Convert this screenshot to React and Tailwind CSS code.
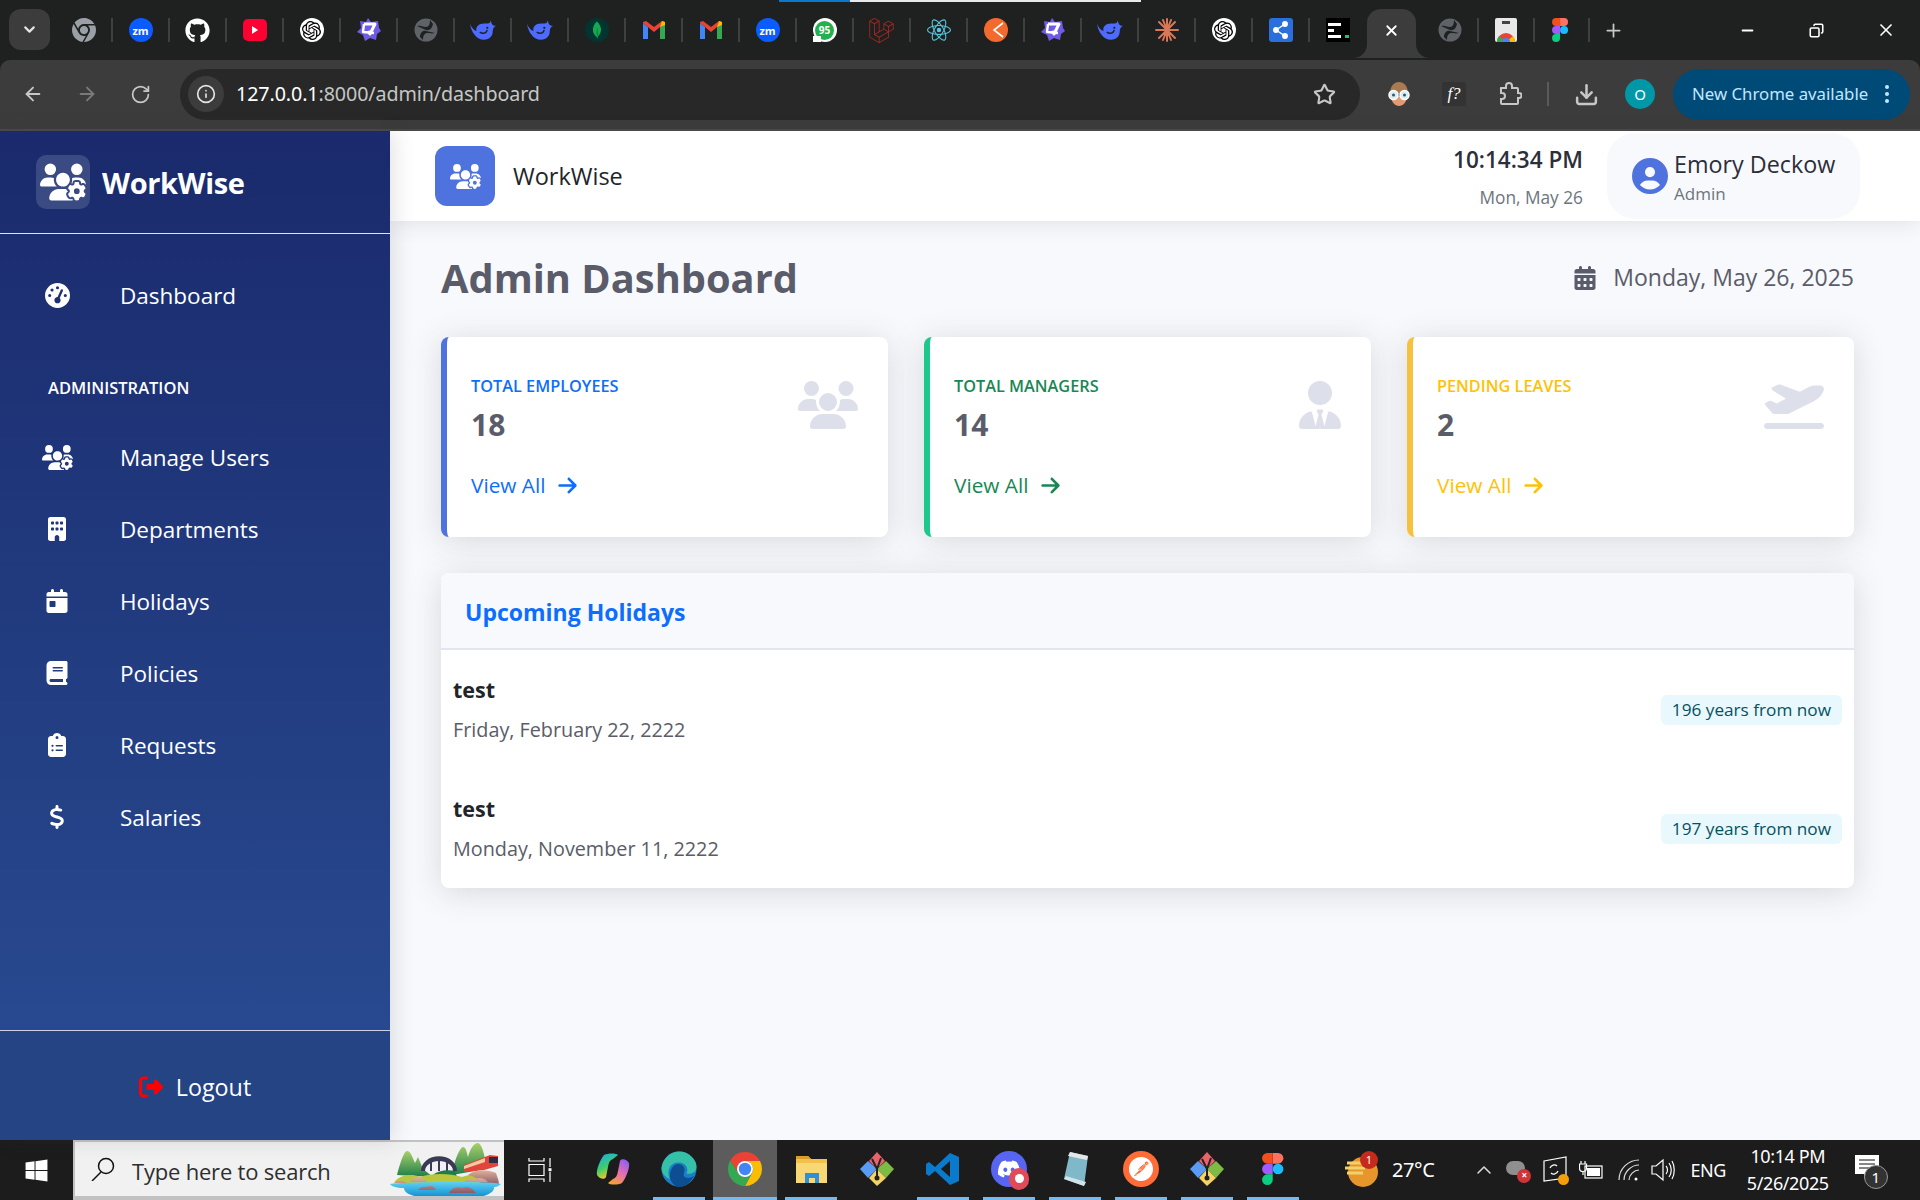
import React from "react";
import { FaUsersGear, FaGaugeHigh, FaBuilding, FaCalendarDay, FaBook, FaClipboardList, FaDollarSign, FaRightFromBracket, FaUsers, FaUserTie, FaPlaneDeparture, FaArrowRight, FaCalendarDays, FaCircleUser, FaGithub, FaChrome, FaWindows, FaDiscord } from "react-icons/fa6";
import { SiOpenai, SiMongodb, SiLaravel, SiReact, SiPostman } from "react-icons/si";
import { LuArrowLeft, LuArrowRight, LuRotateCw, LuInfo, LuStar, LuDownload, LuX, LuPlus, LuMinus, LuCopy, LuChevronDown, LuChevronUp } from "react-icons/lu";

const font = "font-['Open_Sans','Noto_Sans',sans-serif]";

function Zm() {
  return <div className="w-[24px] h-[24px] rounded-full bg-[#0b5cff] flex items-center justify-center text-white text-[11px] font-bold leading-none">zm</div>;
}
function Gmail() {
  return (
    <svg width="24" height="20" viewBox="0 0 24 20">
      <path d="M1 19V3l5 4v12z" fill="#4285f4" />
      <path d="M23 19V3l-5 4v12z" fill="#34a853" />
      <path d="M1 3l11 9 11-9v-1l-3-1-8 6-8-6-3 1z" fill="#ea4335" />
      <path d="M20 1l3 1v3l-5 2z" fill="#fbbc04" />
    </svg>
  );
}
function Deep() {
  return (
    <svg width="26" height="22" viewBox="0 0 24 20">
      <path d="M0 4c1 8 6 15 13 15 5 0 8-3 8-8 0-2 1-4 3-5-2 0-3 0-4-2l-1-3c0 2-1 3-3 3h-3C8 4 5 7 6 11 3 10 1 7 0 4z" fill="#4d6bfe" />
      <circle cx="16" cy="8" r="1" fill="#1f2121" />
      <path d="M9 12c3 2 6 1 7-2" stroke="#1f2121" strokeWidth="1.3" fill="none" />
    </svg>
  );
}
function StarOfD() {
  return (
    <svg width="24" height="24" viewBox="0 0 24 24">
      <path d="M11 0l3 4 7-1 1 7 2 3-4 3-1 6-6-2-5 3-2-6-6-3 4-4-1-7 6 1z" fill="#6d5ce7" />
      <path d="M7 6l11 0-5 10-2-3" stroke="#fff" strokeWidth="3" fill="none" strokeLinejoin="round" />
      <path d="M7 6l-1 8 11 1" stroke="#fff" strokeWidth="2.4" fill="none" strokeLinejoin="round" />
    </svg>
  );
}
function GlobeDark() {
  return (
    <svg width="24" height="24" viewBox="0 0 24 24">
      <circle cx="12" cy="12" r="11.5" fill="#5f6368" />
      <path d="M3 8c4-1 6 1 9 1s4-3 4-7l3 4c-1 5-4 7-7 6s-6-3-9-4z" fill="#1f2121" />
      <path d="M21 15c-3 1-6 0-8 0s-4 2-4 7l-3-3c0-4 3-7 6-6s6 1 9 2z" fill="#1f2121" />
    </svg>
  );
}
function OpenAi() {
  return <div className="w-[24px] h-[24px] rounded-full bg-white flex items-center justify-center"><SiOpenai className="w-[19px] h-[19px] text-black" /></div>;
}
function Gm95() {
  return (
    <div className="w-[24px] h-[24px] rounded-full bg-white flex items-center justify-center relative">
      <div className="w-[19px] h-[19px] rounded-full bg-[#22b14c] text-white text-[10px] font-bold leading-[19px] text-center">95</div>
      <div className="absolute left-0 bottom-0 w-[8px] h-[6px] bg-white" />
    </div>
  );
}
function Orange() {
  return (
    <div className="w-[24px] h-[24px] rounded-full bg-[#f26a2e] flex items-center justify-end pr-[4px]">
      <svg width="12" height="16" viewBox="0 0 12 16"><path d="M11 1L2 8l9 7" stroke="#fff" strokeWidth="1.6" fill="none" /></svg>
    </div>
  );
}
function Claude() {
  return (
    <svg width="24" height="24" viewBox="0 0 24 24" stroke="#d97757" strokeWidth="2" strokeLinecap="round">
      <path d="M12 12V1M12 12v11M12 12H1M12 12h11M12 12L4 4M12 12l8-8M12 12l-8 8M12 12l8 8M12 12L8 2M12 12l4-10M12 12L8 22M12 12l4 10" />
    </svg>
  );
}
function ShareBlue() {
  return (
    <div className="w-[24px] h-[24px] rounded-[3px] bg-[#2a6fdb] flex items-center justify-center">
      <svg width="16" height="18" viewBox="0 0 16 18" fill="#fff" stroke="#fff" strokeWidth="1.5"><circle cx="3" cy="9" r="2.2" /><circle cx="12" cy="3" r="2.2" /><circle cx="12" cy="15" r="2.2" /><path d="M3 9l9-6M3 9l9 6" /></svg>
    </div>
  );
}
function BlackApp() {
  return (
    <div className="w-[24px] h-[24px] bg-black flex flex-col justify-center gap-[3px] pl-[2px]">
      <div className="w-[13px] h-[3px] bg-white" />
      <div className="w-[6px] h-[3px] bg-white" />
      <div className="flex justify-between pr-[1px]"><div className="w-[13px] h-[3px] bg-white" /><div className="w-[4px] h-[3px] bg-[#22c55e]" /></div>
    </div>
  );
}
function WebStore() {
  return (
    <div className="w-[22px] h-[24px] bg-[#e8e8e8] rounded-[2px] flex flex-col items-center justify-between overflow-hidden">
      <div className="w-[8px] h-[3px] mt-[3px] bg-[#444]" />
      <svg width="22" height="13" viewBox="0 0 22 13">
        <path d="M2 13a9 9 0 0 1 18 0z" fill="#ea4335" />
        <path d="M11 13L2 13a9 9 0 0 1 2-6z" fill="#34a853" />
        <path d="M11 13h9a9 9 0 0 0-2-6z" fill="#fbbc04" />
        <circle cx="11" cy="13" r="4" fill="#4285f4" />
      </svg>
    </div>
  );
}
function FigmaColor({ h = 24 }) {
  return (
    <svg width={h * 0.67} height={h} viewBox="0 0 12 18">
      <path d="M6 0h3a3 3 0 0 1 0 6H6z" fill="#ff7262" />
      <path d="M6 0H3a3 3 0 0 0 0 6h3z" fill="#f24e1e" />
      <path d="M6 6H3a3 3 0 0 0 0 6h3z" fill="#a259ff" />
      <circle cx="9" cy="9" r="3" fill="#1abcfe" />
      <path d="M6 12H3a3 3 0 1 0 3 3z" fill="#0acf83" />
    </svg>
  );
}

function Tab({ children, sep = true }) {
  return (
    <div className="w-[57px] h-[30px] shrink-0 flex items-center">
      <div className="flex-1 flex items-center justify-center">{children}</div>
      {sep && <div className="w-[2px] h-[24px] bg-[#3e4040]" />}
    </div>
  );
}

function TabStrip() {
  return (
    <div className="h-[60px] bg-[#1f2121] flex flex-col">
      <div className="h-[2px] flex">
        <div className="w-[779px]" />
        <div className="w-[71px] bg-[#0b78d0]" />
        <div className="w-[291px] bg-[#e8e8e8]" />
      </div>
      <div className="flex-1 flex items-start pl-[9px]">
        <div className="w-[41px] h-[41px] mt-[7px] rounded-[12px] bg-[#3c3c3c] flex items-center justify-center text-[#e3e3e3] mr-[6px]">
          <LuChevronDown className="w-[17px] h-[17px]" strokeWidth={3} />
        </div>
        <div className="flex items-center mt-[13px]">
          <Tab><FaChrome className="w-[24px] h-[24px] text-[#9aa0a6]" /></Tab>
          <Tab><Zm /></Tab>
          <Tab><FaGithub className="w-[25px] h-[25px] text-white" /></Tab>
          <Tab><div className="w-[24px] h-[22px] bg-[#ff0033] rounded-[5px] flex items-center justify-center"><div className="w-0 h-0 border-y-[4px] border-y-transparent border-l-[6px] border-l-white" /></div></Tab>
          <Tab><OpenAi /></Tab>
          <Tab><StarOfD /></Tab>
          <Tab><GlobeDark /></Tab>
          <Tab><Deep /></Tab>
          <Tab><Deep /></Tab>
          <Tab><div className="w-[24px] h-[24px] rounded-full bg-[#023430] flex items-center justify-center"><SiMongodb className="w-[18px] h-[18px] text-[#13aa52]" /></div></Tab>
          <Tab><Gmail /></Tab>
          <Tab><Gmail /></Tab>
          <Tab><Zm /></Tab>
          <Tab><Gm95 /></Tab>
          <Tab><SiLaravel className="w-[25px] h-[25px] text-[#b0281f]" /></Tab>
          <Tab><SiReact className="w-[24px] h-[24px] text-[#58c4dc]" /></Tab>
          <Tab><Orange /></Tab>
          <Tab><StarOfD /></Tab>
          <Tab><Deep /></Tab>
          <Tab><Claude /></Tab>
          <Tab><OpenAi /></Tab>
          <Tab><ShareBlue /></Tab>
          <div className="w-[56px] flex justify-center"><BlackApp /></div>
        </div>
        <div className="relative w-[49px] h-[49px] mt-[7px] ml-[1px] pb-[7px] rounded-t-[14px] bg-[#3c3c3c] flex items-center justify-center text-white shrink-0">
          <LuX className="w-[17px] h-[17px]" strokeWidth={2.5} />
          <svg width="14" height="14" viewBox="0 0 14 14" className="absolute bottom-0 -left-[14px]"><path d="M14 0v14H0c8 0 14-6 14-14z" fill="#3c3c3c" /></svg>
          <svg width="14" height="14" viewBox="0 0 14 14" className="absolute bottom-0 -right-[14px]"><path d="M0 0v14h14C6 14 0 8 0 0z" fill="#3c3c3c" /></svg>
        </div>
        <div className="flex items-center mt-[13px] ml-[6px]">
          <div className="w-[56px]"><Tab><GlobeDark /></Tab></div>
          <div className="w-[55px]"><Tab><WebStore /></Tab></div>
          <div className="w-[56px]"><Tab><FigmaColor /></Tab></div>
          <div className="w-[48px] flex justify-center"><LuPlus className="w-[21px] h-[21px] text-[#c8c8c8]" /></div>
        </div>
        <div className="ml-auto flex items-center h-[56px] text-white">
          <div className="w-[69px] flex justify-center"><LuMinus className="w-[17px] h-[17px]" strokeWidth={2.5} /></div>
          <div className="w-[69px] flex justify-center"><LuCopy className="w-[15px] h-[15px] -scale-x-100" strokeWidth={2.5} /></div>
          <div className="w-[69px] flex justify-center"><LuX className="w-[20px] h-[20px]" strokeWidth={2} /></div>
        </div>
      </div>
    </div>
  );
}

function Toolbar() {
  return (
    <div className="bg-[#1f2121]">
      <div className="h-[71px] bg-[#3c3c3c] rounded-t-[10px] border-b-2 border-[#4a4a4a] flex items-center text-[#c7c7c7] pb-[1px]">
        <div className="w-[180px] flex items-center pl-[22px] gap-[32px] shrink-0">
          <LuArrowLeft className="w-[22px] h-[22px]" />
          <LuArrowRight className="w-[22px] h-[22px] text-[#7a7a7a]" />
          <LuRotateCw className="w-[21px] h-[21px]" />
        </div>
        <div className="w-[1180px] h-[51px] rounded-full bg-[#282828] flex items-center pl-[8px] pr-[24px] shrink-0">
          <div className="w-[36px] h-[36px] rounded-full bg-[#3c3c3c] flex items-center justify-center text-[#e3e3e3]">
            <LuInfo className="w-[20px] h-[20px]" />
          </div>
          <div className="ml-[12px] text-[19.7px] tracking-[-0.1px] text-[#c4c7c5] font-['Noto_Sans',sans-serif]"><span className="text-white">127.0.0.1</span>:8000/admin/dashboard</div>
          <LuStar className="ml-auto w-[23px] h-[23px] text-[#c7c7c7]" strokeWidth={2.2} />
        </div>
        <svg width="24" height="24" viewBox="0 0 24 24" className="shrink-0 ml-[27px]">
          <path d="M3 12C3 4 7 0 12 0s9 4 9 12z" fill="#a97b50" />
          <path d="M4 14c0 6 4 10 8 10s8-4 8-10z" fill="#e39a72" />
          <circle cx="6.5" cy="13" r="4.5" fill="#d9eef2" stroke="#fff" strokeWidth="1.5" />
          <circle cx="17.5" cy="13" r="4.5" fill="#d9eef2" stroke="#fff" strokeWidth="1.5" />
          <circle cx="6.5" cy="13" r="1.5" fill="#357" />
          <circle cx="17.5" cy="13" r="1.5" fill="#357" />
        </svg>
        <div className="w-[24px] h-[24px] ml-[31px] bg-[#333] rounded-[2px] flex items-center justify-center text-white text-[17px] italic font-['Liberation_Serif',serif] shrink-0">f?</div>
        <svg width="24" height="24" viewBox="0 0 24 24" fill="none" stroke="#c7c7c7" strokeWidth="2" className="ml-[32px] shrink-0">
          <path d="M3 6h5V4a3 3 0 0 1 6 0v2h5a1 1 0 0 1 1 1v4h1a2.5 2.5 0 0 1 0 5h-1v5a1 1 0 0 1-1 1H4a1 1 0 0 1-1-1v-4h1a3 3 0 0 0 0-6H3V7a1 1 0 0 1 0-1z" />
        </svg>
        <div className="w-[2px] h-[24px] bg-[#5a5a5a] ml-[25px] shrink-0" />
        <LuDownload className="w-[25px] h-[25px] ml-[25px] shrink-0" strokeWidth={2.4} />
        <div className="w-[30px] h-[30px] ml-[26px] rounded-full bg-[#0097a7] flex items-center justify-center text-white text-[15px] shrink-0 font-['Noto_Sans',sans-serif]">O</div>
        <div className="w-[237px] h-[51px] ml-[18px] rounded-full bg-[#004a77] flex items-center pl-[19px] pr-[21px] text-[#c2e7ff] shrink-0 font-['Noto_Sans',sans-serif] text-[16.8px]">
          <span className="whitespace-nowrap">New Chrome available</span>
          <span className="ml-auto flex flex-col gap-[3px]">
            <span className="w-[4px] h-[4px] rounded-full bg-[#c2e7ff]" />
            <span className="w-[4px] h-[4px] rounded-full bg-[#c2e7ff]" />
            <span className="w-[4px] h-[4px] rounded-full bg-[#c2e7ff]" />
          </span>
        </div>
      </div>
    </div>
  );
}

function NavItem({ icon: Icon, label, mt = "", size = "text-[24px]" }) {
  return (
    <div className={`h-[72px] flex items-center pl-[41px] ${mt}`}>
      <div className="w-[32px] flex justify-center"><Icon className={`text-white ${size}`} /></div>
      <div className="ml-[47px] mt-[2px] text-[22.5px] text-white">{label}</div>
    </div>
  );
}

function Sidebar() {
  return (
    <aside className="w-[390px] shrink-0 flex flex-col bg-gradient-to-b from-[#1a2a6c] to-[#2a4d94] relative z-10 shadow-[4px_0_20px_rgba(58,59,69,0.15)]">
      <div className="h-[103px] border-b border-[#dfe4f0] flex items-center pl-[36px]">
        <div className="w-[54px] h-[54px] rounded-[10px] bg-[#3a4a82] flex items-center justify-center">
          <FaUsersGear className="text-white text-[46px]" />
        </div>
        <div className="ml-[12px] mt-[1px] text-[29px] font-bold text-white tracking-[-0.4px]">WorkWise</div>
      </div>
      <div className="flex-1 pt-[25px]">
        <NavItem icon={FaGaugeHigh} label="Dashboard" size="text-[25px]" />
        <div className="mt-[46px] pl-[48px] text-[16.5px] leading-[22px] font-semibold text-white">ADMINISTRATION</div>
        <NavItem icon={FaUsersGear} label="Manage Users" mt="mt-[22px]" size="text-[31px]" />
        <NavItem icon={FaBuilding} label="Departments" />
        <NavItem icon={FaCalendarDay} label="Holidays" />
        <NavItem icon={FaBook} label="Policies" />
        <NavItem icon={FaClipboardList} label="Requests" />
        <NavItem icon={FaDollarSign} label="Salaries" />
      </div>
      <div className="h-[110px] border-t border-[#c9d0e0] bg-[#244484] flex items-center justify-center pt-[2px]">
        <FaRightFromBracket className="text-[#ff0000] text-[24px] mr-[13px]" />
        <span className="text-[23.3px] mt-[2px] text-white">Logout</span>
      </div>
    </aside>
  );
}

function TopBar() {
  return (
    <header className="h-[90px] bg-white shadow-[0_2px_20px_rgba(58,59,69,0.12)] flex items-center pl-[45px] pr-[60px] relative">
      <div className="w-[60px] h-[60px] rounded-[12px] bg-[#4e73df] flex items-center justify-center">
        <FaUsersGear className="text-white text-[31px]" />
      </div>
      <div className="ml-[18px] mt-[2px] text-[23.5px] font-medium text-[#212529]">WorkWise</div>
      <div className="ml-auto flex flex-col items-end mr-[24px] pt-[2px]">
        <div className="text-[22.5px] leading-[30px] font-semibold text-[#2b2f3a]">10:14:34 PM</div>
        <div className="text-[17.3px] leading-[24px] mt-[11px] text-[#6c757d]">Mon, May 26</div>
      </div>
      <div className="w-[253px] h-[86px] rounded-[28px] bg-[#f8f9fc] flex items-center pl-[25px]">
        <FaCircleUser className="text-[#4e73df] text-[36px]" />
        <div className="ml-[6px] pt-[2px]">
          <div className="text-[23.3px] leading-[32px] font-medium text-[#2b2f3a]">Emory Deckow</div>
          <div className="text-[17px] leading-[24px] mt-[2px] text-[#6c757d]">Admin</div>
        </div>
      </div>
    </header>
  );
}

function StatCard({ border, color, title, value, icon: Icon, iconClass }) {
  return (
    <div className={`w-[447px] h-[200px] bg-white rounded-[8px] border-l-[6px] ${border} shadow-[0_4px_32px_rgba(58,59,69,0.17)] flex justify-between pl-[24px] pr-[30px] pt-[37px]`}>
      <div>
        <div className={`text-[16.3px] leading-[24px] font-semibold ${color}`}>{title}</div>
        <div className="text-[30px] leading-[36px] mt-[9px] font-bold text-[#5a5c69]">{value}</div>
        <div className={`mt-[27px] flex items-center text-[20.8px] leading-[30px] ${color}`}>
          View All <FaArrowRight className="ml-[11px] text-[21px]" />
        </div>
      </div>
      <Icon className={`text-[#dddfeb] ${iconClass}`} />
    </div>
  );
}

function HolidayRow({ name, date, badge }) {
  return (
    <div className="h-[119px] flex items-center justify-between pl-[12px] pr-[12px]">
      <div>
        <div className="text-[21.5px] leading-[32px] font-bold text-[#212529]">{name}</div>
        <div className="text-[19.8px] leading-[30px] mt-[9px] text-[#5a5c69]">{date}</div>
      </div>
      <div className="h-[30px] mt-[1px] rounded-[6px] bg-[#e8f8fc] px-[11px] flex items-center text-[17.2px] font-medium text-[#055160]">{badge}</div>
    </div>
  );
}

function Main() {
  return (
    <main className="flex-1 bg-[#f8f9fc] flex flex-col min-w-0">
      <TopBar />
      <div className="pl-[51px] pr-[66px]">
        <div className="h-[116px] flex items-center justify-between pb-[3px]">
          <h1 className="text-[39.8px] font-bold text-[#5a5c69]">Admin Dashboard</h1>
          <div className="flex items-center text-[23px] text-[#5a5c69]">
            <FaCalendarDays className="text-[24px] mr-[16px]" />Monday, May 26, 2025
          </div>
        </div>
        <div className="flex justify-between">
          <StatCard border="border-[#4e73df]" color="text-[#0d6efd]" title="TOTAL EMPLOYEES" value="18" icon={FaUsers} iconClass="w-[60px] h-[48px] mt-[7px]" />
          <StatCard border="border-[#1cc88a]" color="text-[#198754]" title="TOTAL MANAGERS" value="14" icon={FaUserTie} iconClass="w-[42px] h-[48px] mt-[7px]" />
          <StatCard border="border-[#f6c23e]" color="text-[#ffc107]" title="PENDING LEAVES" value="2" icon={FaPlaneDeparture} iconClass="w-[60px] h-[48px] mt-[7px]" />
        </div>
        <section className="mt-[36px] bg-white rounded-[8px] shadow-[0_4px_32px_rgba(58,59,69,0.17)] overflow-hidden">
          <div className="h-[77px] bg-[#f8f9fc] border-b-2 border-[#e3e6f0] flex items-center pl-[24px] pt-[4px] text-[23px] font-bold text-[#0d6efd]">Upcoming Holidays</div>
          <HolidayRow name="test" date="Friday, February 22, 2222" badge="196 years from now" />
          <HolidayRow name="test" date="Monday, November 11, 2222" badge="197 years from now" />
        </section>
      </div>
    </main>
  );
}

function TB({ children, on = true, active = false }) {
  return (
    <div className="w-[66px] h-[60px] shrink-0 flex flex-col items-center">
      <div className={`h-[57px] w-[64px] flex items-center justify-center ${active ? "bg-[#5c5c5c]" : ""}`}>{children}</div>
      <div className={`h-[3px] ${active ? "w-[64px]" : "w-[52px]"} ${on ? "bg-[#76b9ed]" : ""}`} />
    </div>
  );
}

function SourceTree() {
  return (
    <svg width="36" height="36" viewBox="0 0 36 36">
      <path d="M18 1l8 9-8 8-8-8z" fill="#e9636b" />
      <path d="M9 10l9 8-9 9-8-9z" fill="#5a9cf5" />
      <path d="M27 10l8 8-8 9-9-9z" fill="#7dbb45" />
      <path d="M18 18l9 9-9 8-8-8z" fill="#f6d365" />
      <path d="M13 8l5 10v8M22 7l-4 11" stroke="#222" strokeWidth="2" fill="none" />
      <circle cx="18" cy="27" r="2.5" fill="#222" />
    </svg>
  );
}

function SearchArt() {
  return (
    <svg width="113" height="56" viewBox="0 0 113 56" className="shrink-0">
      <defs>
        <linearGradient id="sa-w" x1="0" y1="0" x2="0" y2="1"><stop stopColor="#5fd0ef" /><stop offset="1" stopColor="#0f8fd2" /></linearGradient>
        <linearGradient id="sa-g" x1="0" y1="0" x2="0" y2="1"><stop stopColor="#a8d06a" /><stop offset="1" stopColor="#1f7d4a" /></linearGradient>
        <linearGradient id="sa-r" x1="0" y1="0" x2="0" y2="1"><stop stopColor="#e0b09a" /><stop offset="1" stopColor="#8a5a6a" /></linearGradient>
      </defs>
      <path d="M7 34C10 22 14 10 17 10c4 0 6 8 8 12l3-6 5 12 10 8z" fill="url(#sa-g)" />
      <path d="M62 34c2-14 8-28 11-28s4 6 5 10c2-8 6-14 10-14s8 16 8 26z" fill="url(#sa-g)" />
      <path d="M31 30a17 14 0 0 1 36 0h-4a14 10 0 0 0-28 0z" fill="#3a3a55" />
      <path d="M41 20v10M49 18v12M57 20v10" stroke="#3a3a55" strokeWidth="2" />
      <path d="M43 34c4-4 14-6 22-4l2 6-24 2z" fill="#1f7d4a" />
      <path d="M74 24l26-10 8 1v10l-14 4-20 2z" fill="#e0443a" />
      <path d="M74 25l21-8v4l-21 7z" fill="#f4c9a0" />
      <rect x="99" y="16" width="9" height="6" fill="#2d2d44" />
      <path d="M78 34c6-6 18-6 28-2 2 6 4 10 2 12H84z" fill="url(#sa-r)" />
      <path d="M4 42c4-8 18-10 26-6 10-4 30-4 42 0 6-3 14-2 18 6z" fill="#b9c63f" />
      <path d="M0 43c10-2 100-3 111 0-2 2-4 3-7 3 1 5-8 10-18 10H34C22 56 14 52 14 47 6 47 1 45 0 43z" fill="url(#sa-w)" />
      <path d="M5 42c2-3 8-3 12 0zM20 41c3-6 12-6 17 0zM74 41c3-4 8-4 10-2 3-3 10-3 14 2zM28 49c2-3 6-4 9-3 3-2 8-1 9 3zM59 52c2-5 9-7 13-5 4-2 10-1 14 5z" fill="url(#sa-r)" />
    </svg>
  );
}

function Taskbar() {
  return (
    <div className="h-[60px] bg-[#1c1c1c] flex items-center text-white font-['Noto_Sans',sans-serif]">
      <div className="w-[73px] flex justify-center shrink-0"><FaWindows className="w-[25px] h-[25px]" /></div>
      <div className="w-[431px] h-[60px] bg-[#f1f1f1] border-2 border-b-4 border-[#c2c2c2] border-r-0 flex items-center pl-[15px] overflow-hidden shrink-0">
        <svg width="25" height="24" viewBox="0 0 25 24" fill="none" stroke="#111" strokeWidth="1.5" className="shrink-0"><circle cx="16" cy="9" r="7.5" /><path d="M11 15L2 24" /></svg>
        <div className="ml-[17px] pt-[4px] text-[22px] leading-none text-[#2e2e2e] tracking-[-0.2px] font-['Open_Sans',sans-serif] whitespace-nowrap">Type here to search</div>
        <div className="ml-auto mr-[1px] flex"><SearchArt /></div>
      </div>
      <div className="w-[71px] flex justify-center shrink-0 mr-[5px]">
        <svg width="24" height="24" viewBox="0 0 24 24" fill="none" stroke="#fff" strokeWidth="1.2"><path d="M1 0v3h15V0M1 24v-3h15v3M1 6.5h15v11H1zM22 0v9M22 14v10" /><rect x="20.5" y="10.2" width="3" height="3" fill="#fff" stroke="none" /></svg>
      </div>
      <TB on={false}>
        <svg width="34" height="32" viewBox="0 0 34 32"><defs><linearGradient id="cp1" x1="0" y1="0" x2="0.4" y2="1"><stop stopColor="#1aa5f0" /><stop offset="0.6" stopColor="#3ecf6b" /><stop offset="1" stopColor="#f6c823" /></linearGradient><linearGradient id="cp2" x1="0.8" y1="0" x2="0.2" y2="1"><stop stopColor="#8f5ff0" /><stop offset="0.5" stopColor="#e86fb0" /><stop offset="1" stopColor="#f6a623" /></linearGradient></defs><path d="M8 2c4-2 12-2 14 0l-5 4c-3 1-4 3-5 8l-2 10C9 27 3 26 1 22c-1-5 3-15 7-20z" fill="url(#cp1)" /><path d="M26 30c-4 2-12 2-14 0l5-4c3-1 4-3 5-8l2-10c1-3 7-2 9 2 1 5-3 15-7 20z" fill="url(#cp2)" /></svg>
      </TB>
      <TB>
        <svg width="36" height="36" viewBox="0 0 36 36"><circle cx="18" cy="18" r="17.5" fill="#1b7ec9" /><path d="M.5 17C2 6 11 .5 18 .5c10 0 17.500 8 17.500 15 0 6-5 8-10 7 3-6-2-12-9-11C9 12 5 20 9 28 4 26 .5 22 .5 17z" fill="#35c1a8" /><path d="M17 13c5 0 8 4 6 9-2 4 4 7 10 3-3 6-9 11-15 11-6-1-10-7-9-13 1-6 4-10 8-10z" fill="#0c4e91" /></svg>
      </TB>
      <TB active>
        <svg width="36" height="36" viewBox="0 0 36 36">
          <path d="M18 10H33A17 17 0 0 0 3.300 9.500L11 22A8 8 0 0 1 18 10Z" fill="#ea4335" />
          <path d="M33 10A17 17 0 0 1 18 35L25 22A8 8 0 0 0 18 10Z" fill="#fbbc04" />
          <path d="M3.300 9.500A17 17 0 0 0 18 35L25 22A8 8 0 0 1 11 22Z" fill="#34a853" />
          <circle cx="18" cy="18" r="8" fill="#fff" /><circle cx="18" cy="18" r="6.200" fill="#4285f4" />
        </svg>
      </TB>
      <TB>
        <svg width="33" height="30" viewBox="0 0 33 30"><path d="M1 2h12l3 3h16v23a1 1 0 0 1-1 1H1z" fill="#f3c04d" /><path d="M1 2h12l3 3H1z" fill="#d99f2b" /><rect x="1" y="9" width="31" height="20" fill="#f8d775" /><path d="M10 29v-10h14v10h-4v-5h-6v5z" fill="#2f8fd9" /></svg>
      </TB>
      <TB on={false}><SourceTree /></TB>
      <TB>
        <svg width="34" height="34" viewBox="0 0 34 34"><path d="M24 1L9 15 3 10 0 12v10l3 2 6-5 15 14 9-4V5z" fill="#0a7acc" /><path d="M24 9l-9 8 9 8z" fill="#1c1c1c" /></svg>
      </TB>
      <TB>
        <div className="relative">
          <div className="w-[36px] h-[36px] rounded-full bg-[#5865f2] flex items-center justify-center"><FaDiscord className="text-white text-[24px]" /></div>
          <div className="absolute -right-[2px] -bottom-[3px] w-[20px] h-[22px] rounded-full bg-[#e04b5a] flex items-center justify-center"><div className="w-[9px] h-[9px] rounded-full bg-white" /></div>
        </div>
      </TB>
      <TB>
        <svg width="34" height="36" viewBox="0 0 34 36"><path d="M12 1l18 4-4 30L6 28z" fill="#7fb8c8" /><path d="M12 1l18 4-1 4L10 5z" fill="#e6e6e6" /><path d="M6 28l20 7 2-4-20-6z" fill="#cfe3e8" /></svg>
      </TB>
      <TB>
        <div className="w-[36px] h-[36px] rounded-full bg-[#ff6c37] flex items-center justify-center"><SiPostman className="w-[24px] h-[24px] text-white" /></div>
      </TB>
      <TB><SourceTree /></TB>
      <TB><FigmaColor h={32} /></TB>
      <div className="relative ml-[39px] w-[30px] h-[36px] shrink-0">
        <svg width="36" height="36" viewBox="0 0 36 36"><circle cx="18" cy="20" r="15" fill="#e7962b" /><path d="M2 11h18M0 16h20M2 21h16" stroke="#f1d26a" strokeWidth="3" /></svg>
        <div className="absolute left-[15px] -top-[1px] w-[18px] h-[18px] rounded-full bg-[#c42b1c] text-white text-[11px] leading-[18px] text-center">1</div>
      </div>
      <div className="ml-[17px] text-[20px] tracking-[-0.4px]">27°C</div>
      <LuChevronUp className="ml-[38px] w-[24px] h-[24px] text-[#ddd] shrink-0" strokeWidth={1.5} />
      <div className="relative ml-[10px] w-[24px] h-[24px] shrink-0">
        <div className="w-[19px] h-[14px] mt-[3px] rounded-full bg-[#8f8f8f]" />
        <div className="absolute right-[-1px] bottom-[-1px] w-[14px] h-[14px] rounded-full bg-[#d13438] text-white text-[10px] leading-[13px] text-center font-bold">×</div>
      </div>
      <div className="relative ml-[13px] w-[24px] h-[28px] shrink-0">
        <svg width="24" height="28" viewBox="0 0 24 28" fill="none" stroke="#fff" strokeWidth="1.2"><path d="M1 5l22-4v21L1 25z" /><path d="M7 12c1-3 5-4 7-2M15 15c-1 3-5 4-7 2" /></svg>
        <div className="absolute right-[-2px] bottom-[-1px] w-[11px] h-[11px] rounded-full bg-[#f59e0b]" />
      </div>
      <svg width="24" height="20" viewBox="0 0 24 20" fill="none" stroke="#fff" strokeWidth="1.2" className="ml-[12px] shrink-0">
        <path d="M2 1v3M6 1v3M0.500 4h7v4a3.500 3.500 0 0 1-7 0zM4 11v4" />
        <rect x="6" y="6" width="17" height="12" />
        <rect x="8" y="8" width="13" height="8" fill="#fff" stroke="none" />
      </svg>
      <svg width="22" height="22" viewBox="0 0 22 22" fill="none" stroke="#ddd" strokeWidth="1.2" className="ml-[15px] shrink-0">
        <path d="M1 21C1 10 10 1 21 1M6 21C6 13 13 6 21 6M11 21c0-5 5-10 10-10" />
        <circle cx="18" cy="20" r="1.500" fill="#fff" stroke="none" />
      </svg>
      <svg width="24" height="24" viewBox="0 0 24 24" fill="none" stroke="#fff" strokeWidth="1.2" className="ml-[11px] shrink-0">
        <path d="M1 8h4l7-6v20l-7-6H1zM15 8c2 2 2 6 0 8M18 5c3 4 3 10 0 14M21 3c3 5 3 13 0 18" />
      </svg>
      <div className="ml-[15px] text-[18px] tracking-[-0.5px]">ENG</div>
      <div className="ml-[10px] w-[104px] text-center text-[18px] leading-[27px] tracking-[-0.4px] shrink-0">
        <div>10:14 PM</div>
        <div>5/26/2025</div>
      </div>
      <div className="relative ml-[15px] w-[24px] h-[30px] shrink-0">
        <svg width="24" height="24" viewBox="0 0 24 24"><path d="M0 0h24v19H12l-3 5v-5H0z" fill="#fff" /><path d="M4 5h16M4 9h16M4 13h12" stroke="#111" strokeWidth="1.2" /></svg>
        <div className="absolute right-[-9px] bottom-[-4px] w-[24px] h-[24px] rounded-full bg-[#333] border border-[#999] text-white text-[15px] leading-[22px] text-center">1</div>
      </div>
    </div>
  );
}

export default function App() {
  return (
    <div className={`w-[1920px] h-[1200px] flex flex-col overflow-hidden ${font}`}>
      <TabStrip />
      <Toolbar />
      <div className="flex-1 flex min-h-0">
        <Sidebar />
        <Main />
      </div>
      <Taskbar />
    </div>
  );
}
